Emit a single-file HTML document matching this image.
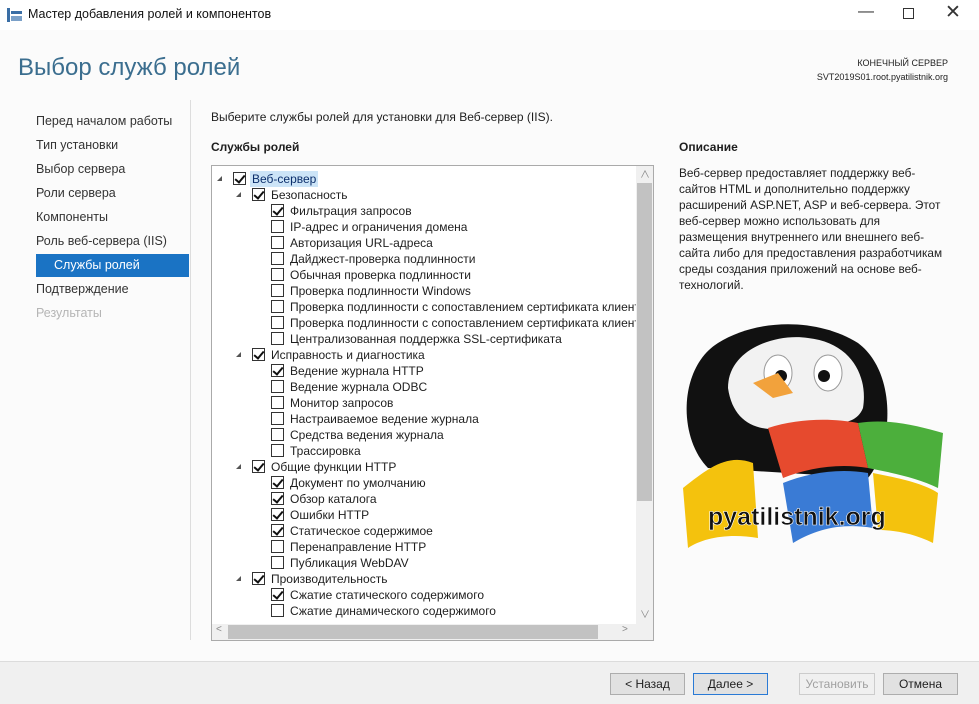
<!DOCTYPE html>
<html><head><meta charset="utf-8"><style>
*{margin:0;padding:0;box-sizing:border-box}
body{width:979px;height:704px;background:#fff;font-family:"Segoe UI","Liberation Sans","Noto Sans CJK SC",sans-serif;font-size:12px;color:#1e1e1e;position:relative;overflow:hidden}
.a{position:absolute;white-space:nowrap}
.nav{left:36px;font-size:12.5px;color:#333}
.row{position:absolute;height:16px;line-height:16px;font-size:12px;white-space:nowrap}
.cb{position:absolute;width:13px;height:13px;border:1px solid #333;background:#fff;top:1px}
.cb.c::after{content:"";position:absolute;left:3px;top:0px;width:4px;height:8px;border:solid #111;border-width:0 2px 2px 0;transform:rotate(40deg)}
.ar{position:absolute;top:5px;width:0;height:0;border-left:5px solid transparent;border-bottom:5px solid #555}
.btn{position:absolute;top:673px;height:22px;border:1px solid #adadad;background:#e1e1e1;font-size:12px;text-align:center;line-height:20px}
</style></head><body>
<div class="a" style="left:0;top:0;width:979px;height:30px;background:#fff"></div>
<svg class="a" style="left:7px;top:8px" width="16" height="14"><rect x="0" y="0" width="3" height="14" fill="#3a6ea5"/><rect x="4" y="3" width="11" height="3" fill="#3a6ea5"/><rect x="4" y="8" width="11" height="5" fill="#7aa0c8"/></svg>
<div class="a" style="left:28px;top:7px;font-size:12.5px;color:#111">Мастер добавления ролей и компонентов</div>
<div class="a" style="left:858px;top:3px;font-size:16px;color:#333">—</div>
<div class="a" style="left:903px;top:8px;width:11px;height:11px;border:1px solid #333"></div>
<div class="a" style="left:945px;top:1px;font-size:19px;color:#333">✕</div>
<div class="a" style="left:0;top:30px;width:979px;height:631px;background:#fbfbfb"></div>
<div class="a" style="left:18px;top:54px;font-size:24px;color:#3b6e8f;font-weight:300">Выбор служб ролей</div>
<div class="a" style="right:31px;top:56px;font-size:9px;color:#222;text-align:right;line-height:14px">КОНЕЧНЫЙ СЕРВЕР<br>SVT2019S01.root.pyatilistnik.org</div>
<div class="a" style="left:190px;top:100px;width:1px;height:540px;background:#ddd"></div>
<div class="a nav" style="top:114px">Перед началом работы</div>
<div class="a nav" style="top:138px">Тип установки</div>
<div class="a nav" style="top:162px">Выбор сервера</div>
<div class="a nav" style="top:186px">Роли сервера</div>
<div class="a nav" style="top:210px">Компоненты</div>
<div class="a nav" style="top:234px">Роль веб-сервера (IIS)</div>
<div class="a" style="left:36px;top:254px;width:153px;height:23px;background:#1a73c4"></div>
<div class="a" style="left:54px;top:258px;color:#fff;font-size:12.5px">Службы ролей</div>
<div class="a nav" style="top:282px">Подтверждение</div>
<div class="a nav" style="top:306px;color:#b5b5b5">Результаты</div>
<div class="a" style="left:211px;top:110px;font-size:12px">Выберите службы ролей для установки для Веб-сервер (IIS).</div>
<div class="a" style="left:211px;top:140px;font-size:12px;font-weight:bold">Службы ролей</div>
<div class="a" style="left:679px;top:140px;font-size:12px;font-weight:bold">Описание</div>
<div class="a" style="left:679px;top:165px;width:272px;font-size:11.8px;line-height:16px;white-space:normal">Веб-сервер предоставляет поддержку веб-сайтов HTML и дополнительно поддержку расширений ASP.NET, ASP и веб-сервера. Этот веб-сервер можно использовать для размещения внутреннего или внешнего веб-сайта либо для предоставления разработчикам среды создания приложений на основе веб-технологий.</div>
<div class="a" style="left:211px;top:165px;width:443px;height:476px;border:1px solid #aaa;background:#fff;overflow:hidden">
<div id="t" style="position:absolute;left:0;top:0;width:424px;height:458px;overflow:hidden"></div>
<div style="position:absolute;left:424px;top:0;width:17px;height:458px;background:#f0f0f0"><div style="position:absolute;left:1px;top:17px;width:15px;height:318px;background:#c2c2c2"></div><div style="position:absolute;left:4px;top:440px;font-size:10px;color:#888">∨</div><div style="position:absolute;left:4px;top:0px;font-size:10px;color:#888">∧</div></div>
<div style="position:absolute;left:0;top:458px;width:441px;height:16px;background:#f0f0f0"><div style="position:absolute;left:16px;top:1px;width:370px;height:14px;background:#c2c2c2"></div><div style="position:absolute;left:410px;top:0px;font-size:10px;color:#888">&gt;</div><div style="position:absolute;left:4px;top:0px;font-size:10px;color:#888">&lt;</div></div>
</div>
<svg class="a" style="left:668px;top:318px" width="295" height="245" viewBox="0 0 295 245">
<path d="M40 150 C10 120 10 50 50 25 C90 0 150 0 190 25 C230 55 225 130 200 160 Z" fill="#111"/>
<path d="M60 70 C60 30 110 15 140 20 C185 25 200 60 195 90 C185 115 150 100 120 110 C90 115 65 105 60 70Z" fill="#f2f2f2"/>
<ellipse cx="110" cy="55" rx="14" ry="18" fill="#fff" stroke="#999"/><circle cx="113" cy="58" r="6" fill="#111"/>
<ellipse cx="160" cy="55" rx="14" ry="18" fill="#fff" stroke="#999"/><circle cx="156" cy="58" r="6" fill="#111"/>
<path d="M85 65 L110 55 L125 75 L105 80 Z" fill="#f2a23c"/>
<path d="M15 170 C40 150 60 135 85 145 L90 220 C60 215 35 220 20 230 Z" fill="#f4c20d"/>
<path d="M100 110 C130 100 165 100 190 105 L200 150 C170 145 140 150 115 160 Z" fill="#e64a2e"/>
<path d="M190 105 C220 100 250 108 275 115 L270 170 C250 160 225 155 200 150 Z" fill="#4caf3c"/>
<path d="M115 165 C140 155 170 150 200 155 L205 210 C175 205 150 210 125 225 Z" fill="#3a7bd5"/>
<path d="M205 155 C230 160 255 165 270 175 L265 225 C245 215 225 212 210 212 Z" fill="#f4c20d"/>
<text x="40" y="207" font-family="Liberation Sans,sans-serif" font-weight="bold" font-size="25" fill="#111" stroke="#fff" stroke-width="0.6">pyatilistnik.org</text>
</svg>
<div class="a" style="left:0;top:661px;width:979px;height:43px;background:#f0f0f0;border-top:1px solid #dcdcdc"></div>
<div class="btn" style="left:610px;width:75px">&lt; Назад</div>
<div class="btn" style="left:693px;width:75px;border-color:#2a7ad5">Далее &gt;</div>
<div class="btn" style="left:799px;width:76px;color:#a0a0a0;background:#f0f0f0;border-color:#ccc">Установить</div>
<div class="btn" style="left:883px;width:75px">Отмена</div>
<script>
var d=[[0,1,1,"Веб-сервер"],[1,1,1,"Безопасность"],[2,1,0,"Фильтрация запросов"],[2,0,0,"IP-адрес и ограничения домена"],[2,0,0,"Авторизация URL-адреса"],[2,0,0,"Дайджест-проверка подлинности"],[2,0,0,"Обычная проверка подлинности"],[2,0,0,"Проверка подлинности Windows"],[2,0,0,"Проверка подлинности с сопоставлением сертификата клиента"],[2,0,0,"Проверка подлинности с сопоставлением сертификата клиента IIS"],[2,0,0,"Централизованная поддержка SSL-сертификата"],[1,1,1,"Исправность и диагностика"],[2,1,0,"Ведение журнала HTTP"],[2,0,0,"Ведение журнала ODBC"],[2,0,0,"Монитор запросов"],[2,0,0,"Настраиваемое ведение журнала"],[2,0,0,"Средства ведения журнала"],[2,0,0,"Трассировка"],[1,1,1,"Общие функции HTTP"],[2,1,0,"Документ по умолчанию"],[2,1,0,"Обзор каталога"],[2,1,0,"Ошибки HTTP"],[2,1,0,"Статическое содержимое"],[2,0,0,"Перенаправление HTTP"],[2,0,0,"Публикация WebDAV"],[1,1,1,"Производительность"],[2,1,0,"Сжатие статического содержимого"],[2,0,0,"Сжатие динамического содержимого"]];
var h="";d.forEach(function(r,i){var x=r[0]*19,y=5+i*16;
h+='<div class="row" style="left:0;top:'+y+'px;width:424px">';
if(r[2])h+='<div class="ar" style="left:'+(x+5)+'px"></div>';
h+='<div class="cb'+(r[1]?' c':'')+'" style="left:'+(x+21)+'px"></div>';
h+='<span style="position:absolute;left:'+(x+40)+'px;top:0;'+(i==0?'background:#cce4f7;color:#0b2e6b;padding:0 2px;margin-left:-2px':'')+'">'+r[3]+'</span></div>';});
document.getElementById("t").innerHTML=h;
</script>
</body></html>
